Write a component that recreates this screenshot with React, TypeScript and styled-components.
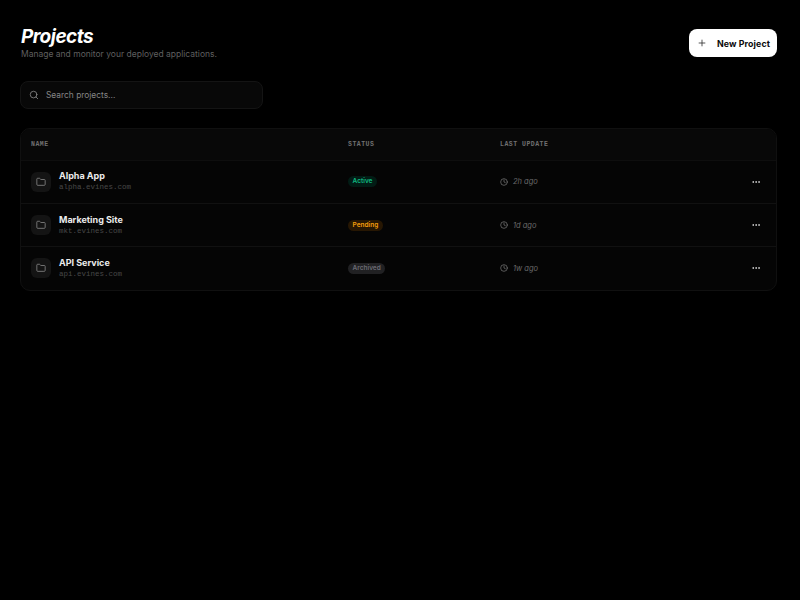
import React from "react";
import styled, { createGlobalStyle } from "styled-components";
import { Search, Plus, Folder, Clock, MoreHorizontal } from "lucide-react";

const GlobalStyle = createGlobalStyle`
	html, body { margin: 0; background: #000; }
	body { font-family: "Inter", sans-serif; }
`;

const Page = styled.main`
	box-sizing: border-box;
	width: 800px;
	height: 600px;
	padding: 26px 23px 0 20px;
	overflow: hidden;
	background: #000;
`;

const Header = styled.header`
	display: flex;
	justify-content: space-between;
	align-items: flex-start;
	margin-bottom: 21px;
`;

const Title = styled.h1`
	margin: 0 0 0 1px;
	color: #fff;
	font-size: 19px;
	line-height: 22px;
	font-weight: 700;
	font-style: italic;
	letter-spacing: -0.5px;
`;

const Subtitle = styled.p`
	margin: 0 0 0 1px;
	color: #5f5f5f;
	font-size: 8.5px;
	line-height: 12px;
`;

const NewButton = styled.button`
	display: flex;
	align-items: center;
	gap: 10px;
	height: 28px;
	margin-top: 3px;
	padding: 0 7px 0 8px;
	border: 0;
	border-radius: 8px;
	background: #fff;
	color: #0a0a0a;
	font-family: inherit;
	font-size: 8.8px;
	font-weight: 700;
	letter-spacing: 0.1px;
`;

const SearchBox = styled.label`
	box-sizing: border-box;
	display: flex;
	align-items: center;
	gap: 7px;
	width: 243px;
	height: 28px;
	margin-bottom: 19px;
	padding: 0 8px;
	border: 1px solid #141414;
	border-radius: 8px;
	background: #080808;
	color: #858585;
	font-size: 8.4px;
`;

const Table = styled.section`
	box-sizing: border-box;
	width: 757px;
	border: 1px solid #101010;
	border-radius: 10px;
	background: #050505;
	overflow: hidden;
`;

const HeadRow = styled.div`
	display: grid;
	grid-template-columns: 317px 152px 1fr;
	align-items: center;
	height: 30.5px;
	padding-left: 10px;
	background: #080808;
	border-bottom: 1px solid #0e0e0e;
`;

const HeadCell = styled.span`
	color: #707070;
	font-family: "Liberation Mono", monospace;
	font-size: 6.5px;
	font-weight: 700;
	letter-spacing: 0.5px;
`;

const Row = styled.div`
	display: grid;
	grid-template-columns: 317px 152px 1fr 25px;
	align-items: center;
	height: 42.4px;
	padding-left: 10px;
	border-bottom: 1px solid #111;

	&:last-child {
		border-bottom: 0;
	}
`;

const NameCell = styled.div`
	display: flex;
	align-items: center;
	gap: 8px;
`;

const IconTile = styled.div`
	display: flex;
	align-items: center;
	justify-content: center;
	width: 20px;
	height: 20px;
	border-radius: 6px;
	background: #141414;
	color: #858585;
`;

const ProjectName = styled.div`
	color: #ececec;
	font-size: 9px;
	line-height: 12px;
	font-weight: 700;
`;

const ProjectUrl = styled.div`
	color: #484848;
	font-family: "Liberation Mono", monospace;
	font-size: 7.5px;
	line-height: 11px;
`;

const tones = {
	active: { bg: "#021c15", fg: "#10b981" },
	pending: { bg: "#271703", fg: "#f59e0b" },
	archived: { bg: "#212123", fg: "#6b6b73" },
};

const Badge = styled.span<{ $tone: keyof typeof tones }>`
	justify-self: start;
	padding: 2px 4.5px;
	border-radius: 999px;
	background: ${(p) => tones[p.$tone].bg};
	color: ${(p) => tones[p.$tone].fg};
	font-size: 6.5px;
	line-height: 7px;
	font-weight: 600;
`;

const Updated = styled.div`
	display: flex;
	align-items: center;
	gap: 5px;
	color: #6a6a6a;
	font-size: 7.5px;
	font-style: italic;
`;

const Actions = styled.div`
	display: flex;
	color: #e5e5e5;
`;

const projects = [
	{ name: "Alpha App", url: "alpha.evines.com", status: "Active", tone: "active", time: "2h ago" },
	{ name: "Marketing Site", url: "mkt.evines.com", status: "Pending", tone: "pending", time: "1d ago" },
	{ name: "API Service", url: "api.evines.com", status: "Archived", tone: "archived", time: "1w ago" },
] as const;

const App: React.FC = () => {
	return (
		<Page>
			<GlobalStyle />
			<Header>
				<div>
					<Title>Projects</Title>
					<Subtitle>Manage and monitor your deployed applications.</Subtitle>
				</div>
				<NewButton>
					<Plus size={10} color="#333" />
					New Project
				</NewButton>
			</Header>

			<SearchBox>
				<Search size={10} color="#888" />
				Search projects...
			</SearchBox>

			<Table>
				<HeadRow>
					<HeadCell>NAME</HeadCell>
					<HeadCell>STATUS</HeadCell>
					<HeadCell>LAST UPDATE</HeadCell>
				</HeadRow>
				{projects.map((p) => (
					<Row key={p.name}>
						<NameCell>
							<IconTile>
								<Folder size={10} />
							</IconTile>
							<div>
								<ProjectName>{p.name}</ProjectName>
								<ProjectUrl>{p.url}</ProjectUrl>
							</div>
						</NameCell>
						<Badge $tone={p.tone}>{p.status}</Badge>
						<Updated>
							<Clock size={8} color="#808080" />
							{p.time}
						</Updated>
						<Actions>
							<MoreHorizontal size={10} />
						</Actions>
					</Row>
				))}
			</Table>
		</Page>
	);
};

export default App;
